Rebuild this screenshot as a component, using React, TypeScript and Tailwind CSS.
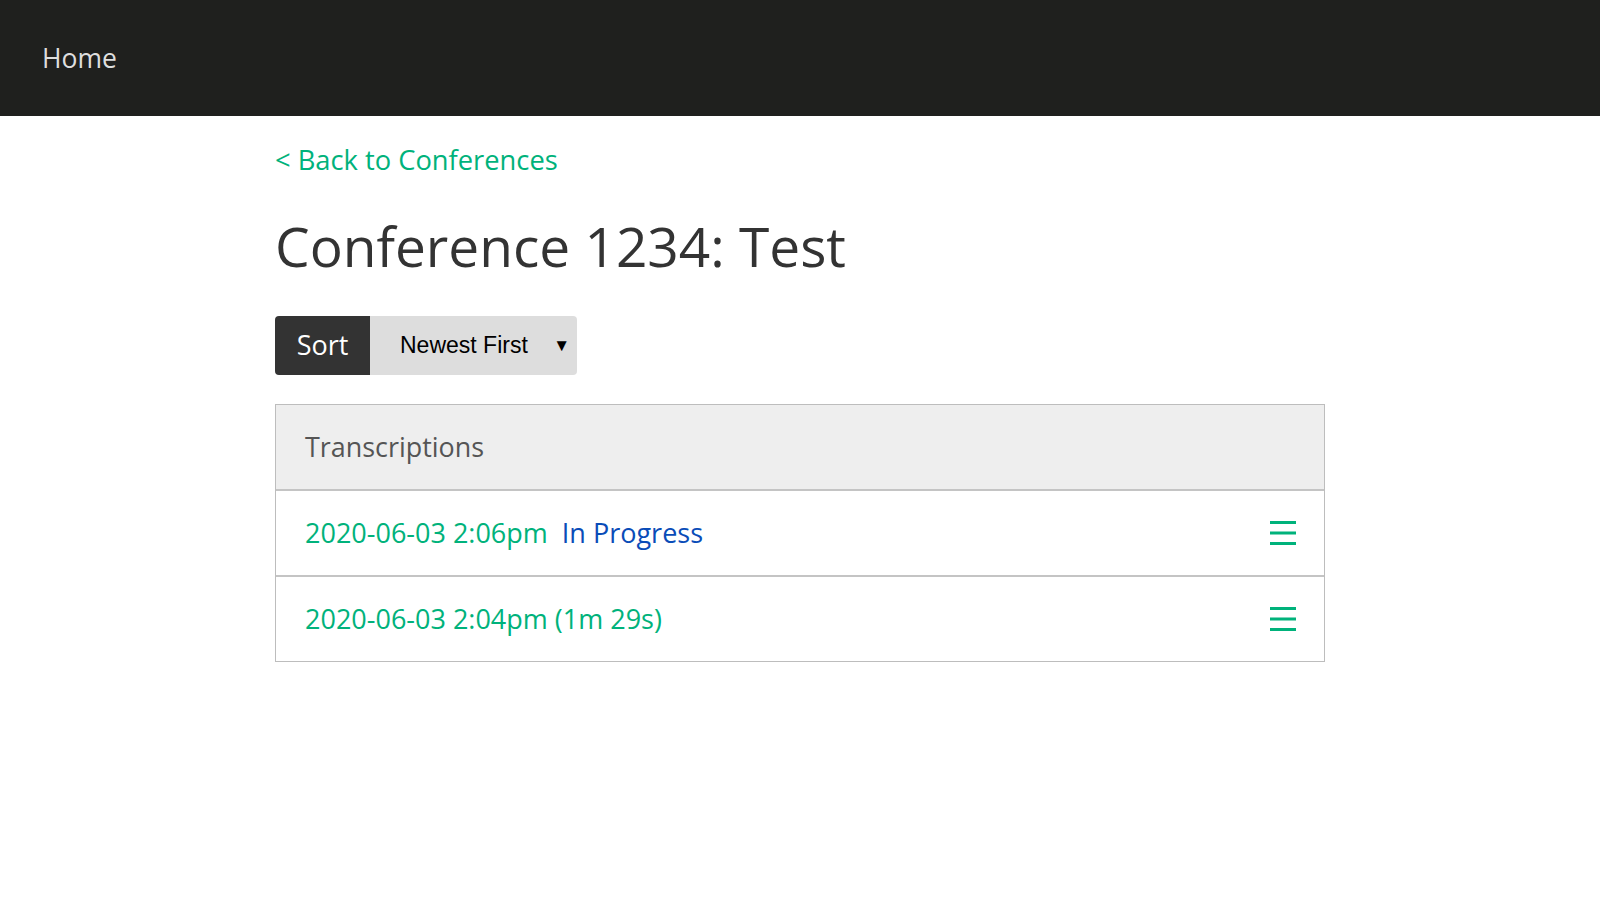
const font = { fontFamily: '"Open Sans", "Noto Sans", sans-serif' }

function MenuIcon() {
  return (
    <svg width="26" height="26" viewBox="0 0 26 26" className="block">
      <rect x="0" y="1" width="26" height="3" fill="#00b27b" />
      <rect x="0" y="11.5" width="26" height="3" fill="#00b27b" />
      <rect x="0" y="22" width="26" height="3" fill="#00b27b" />
    </svg>
  )
}

const transcriptions = [
  { time: '2020-06-03 2:06pm', status: 'In Progress' },
  { time: '2020-06-03 2:04pm (1m 29s)', status: null },
]

export default function App() {
  return (
    <div className="min-h-screen bg-white" style={font}>
      <header className="h-[116px] bg-[#1f201e] flex items-center px-[42px]">
        <a href="#" className="text-[26.5px] text-[#dedede] leading-none">
          Home
        </a>
      </header>

      <main className="w-[1050px] mx-auto">
        <div className="pt-[28px]">
          <a href="#" className="text-[27.3px] leading-[32px] text-[#00b27b]">
            &lt; Back to Conferences
          </a>
        </div>

        <h1 className="mt-[36px] text-[55px] leading-[68px] text-[#333333]">Conference 1234: Test</h1>

        <div className="mt-[36px] flex h-[59px] w-fit rounded-[4px] overflow-hidden">
          <div className="w-[95px] bg-[#333333] text-white text-[27px] flex items-center justify-center">Sort</div>
          <div
            className="w-[207px] bg-[#dddddd] flex items-center justify-between pl-[30px] pr-[7px] text-black"
            style={{ fontFamily: '"Liberation Sans", Arial, sans-serif' }}
          >
            <span className="text-[23px]">Newest First</span>
            <span className="text-[17px] leading-none">▼</span>
          </div>
        </div>

        <div className="mt-[29px] border border-[#bdbdbd]">
          <div className="h-[84px] bg-[#eeeeee] flex items-center px-[29px] text-[26.9px] text-[#555555]">
            Transcriptions
          </div>
          {transcriptions.map((t) => (
            <div
              key={t.time}
              className="h-[86px] border-t-2 border-[#c4c4c4] flex items-center justify-between pl-[29px] pr-[28px] text-[27px]"
            >
              <div className="flex items-center gap-[14px]">
                <a href="#" className="text-[#00b27b]">
                  {t.time}
                </a>
                {t.status && <span className="text-[#0a4cb8]">{t.status}</span>}
              </div>
              <MenuIcon />
            </div>
          ))}
        </div>
      </main>
    </div>
  )
}
